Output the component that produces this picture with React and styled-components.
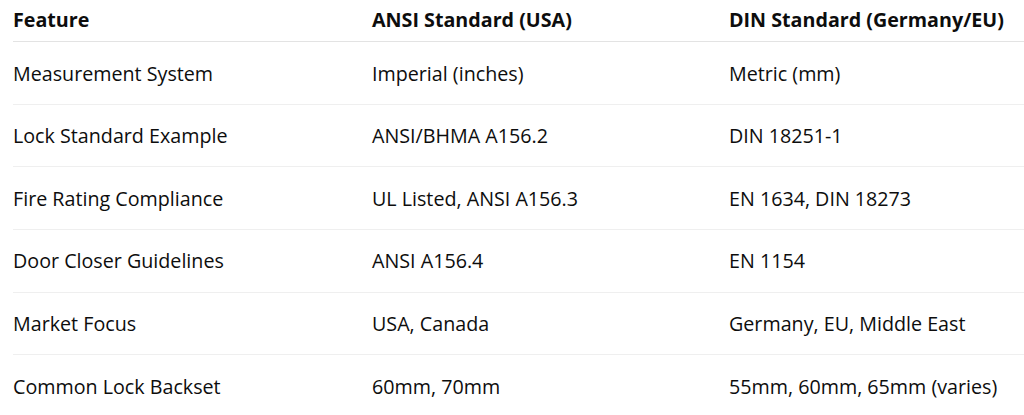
import styled, { createGlobalStyle } from "styled-components";

const GlobalStyle = createGlobalStyle`
  html, body {
    margin: 0;
    padding: 0;
    background: #ffffff;
  }
  body {
    font-family: "Open Sans", "Noto Sans", "Liberation Sans", sans-serif;
    color: #0d0d0d;
  }
`;

const Wrapper = styled.div`
  padding-left: 13px;
  overflow: hidden;
  height: 415px;
`;

const Table = styled.div`
  display: grid;
  grid-template-columns: 359px 357px 1fr;
  width: 1011px;
`;

const Row = styled.div`
  display: contents;
`;

const Cell = styled.div`
  display: flex;
  align-items: center;
  height: ${p => (p.$head ? "42.3px" : "62.6px")};
  padding-bottom: ${p => (p.$head ? "3px" : "0")};
  font-size: 19.7px;
  font-weight: ${p => (p.$head ? 700 : 400)};
  border-bottom: 1px solid ${p => (p.$head ? "#e3e3e3" : p.$last ? "transparent" : "#efefef")};
  box-sizing: border-box;
  white-space: nowrap;
`;

const rows = [
  ["Measurement System", "Imperial (inches)", "Metric (mm)"],
  ["Lock Standard Example", "ANSI/BHMA A156.2", "DIN 18251-1"],
  ["Fire Rating Compliance", "UL Listed, ANSI A156.3", "EN 1634, DIN 18273"],
  ["Door Closer Guidelines", "ANSI A156.4", "EN 1154"],
  ["Market Focus", "USA, Canada", "Germany, EU, Middle East"],
  ["Common Lock Backset", "60mm, 70mm", "55mm, 60mm, 65mm (varies)"],
];

export default function App() {
  return (
    <>
      <GlobalStyle />
      <Wrapper>
        <Table>
          <Row>
            <Cell $head>Feature</Cell>
            <Cell $head>ANSI Standard (USA)</Cell>
            <Cell $head>DIN Standard (Germany/EU)</Cell>
          </Row>
          {rows.map((r, i) => (
            <Row key={r[0]}>
              {r.map(c => (
                <Cell key={c} $last={i === rows.length - 1}>{c}</Cell>
              ))}
            </Row>
          ))}
        </Table>
      </Wrapper>
    </>
  );
}
